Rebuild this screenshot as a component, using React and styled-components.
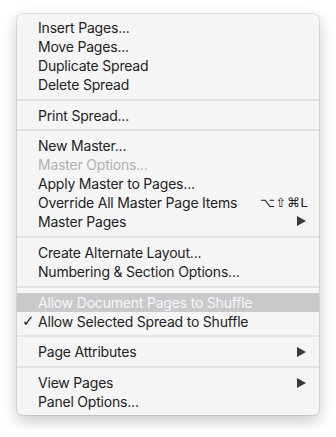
import React from 'react';
import styled, { createGlobalStyle } from 'styled-components';

const GlobalStyle = createGlobalStyle`
    html, body {
        margin: 0;
        background: #ffffff;
    }
`;

const Page = styled.div`
    padding: 14px 17px;
`;

const Menu = styled.div`
    width: 302px;
    box-sizing: border-box;
    padding: 4px 0 4px;
    background-color: #f5f5f5;
    border-radius: 5px;
    box-shadow: 0 0 0 0.5px rgba(0, 0, 0, 0.18), 0 6px 16px rgba(0, 0, 0, 0.22);
    font-family: Inter, "Liberation Sans", sans-serif;
    font-size: 14px;
    letter-spacing: -0.2px;
    color: #232323;
`;

const Item = styled.div`
    position: relative;
    display: flex;
    align-items: center;
    height: 18.9px;
    padding: 0 11px 0 21px;
    background-color: ${p => (p.$highlighted ? '#c9c9c9' : 'transparent')};
    color: ${p => (p.$highlighted ? '#f6f5fd' : p.$disabled ? '#b1b1b1' : 'inherit')};
    white-space: nowrap;
`;

const Label = styled.span`
    flex: 1;
`;

const Check = styled.span`
    position: absolute;
    left: 5px;
    top: 0;
    line-height: 19px;
    font-family: "DejaVu Sans", sans-serif;
    font-size: 15px;
    font-weight: bold;
`;

const Shortcut = styled.span`
    font-family: "DejaVu Sans", sans-serif;
    font-size: 13px;
    letter-spacing: 0.5px;
`;

const Separator = styled.div`
    height: 2px;
    margin: 5px 0;
    background-color: #e3e3e3;
`;

const Arrow = () => (
    <svg width="9" height="10" viewBox="0 0 9 10" style={{ marginRight: 2 }}>
        <polygon points="0,0 9,5 0,10" fill="#3a3a3a" />
    </svg>
);

const groups = [
    [
        { label: 'Insert Pages...' },
        { label: 'Move Pages...' },
        { label: 'Duplicate Spread' },
        { label: 'Delete Spread' },
    ],
    [{ label: 'Print Spread...' }],
    [
        { label: 'New Master...' },
        { label: 'Master Options...', disabled: true },
        { label: 'Apply Master to Pages...' },
        { label: 'Override All Master Page Items', shortcut: '⌥⇧⌘L' },
        { label: 'Master Pages', submenu: true },
    ],
    [
        { label: 'Create Alternate Layout...' },
        { label: 'Numbering & Section Options...' },
    ],
    [
        { label: 'Allow Document Pages to Shuffle', highlighted: true },
        { label: 'Allow Selected Spread to Shuffle', checked: true },
    ],
    [{ label: 'Page Attributes', submenu: true }],
    [
        { label: 'View Pages', submenu: true },
        { label: 'Panel Options...' },
    ],
];

export default function App() {
    return (
        <Page>
            <GlobalStyle />
            <Menu>
                {groups.map((group, gi) => (
                    <React.Fragment key={gi}>
                        {gi > 0 && <Separator />}
                        {group.map((item, i) => (
                            <Item
                                key={i}
                                $disabled={item.disabled}
                                $highlighted={item.highlighted}
                            >
                                {item.checked && <Check>✓</Check>}
                                <Label>{item.label}</Label>
                                {item.shortcut && <Shortcut>{item.shortcut}</Shortcut>}
                                {item.submenu && <Arrow />}
                            </Item>
                        ))}
                    </React.Fragment>
                ))}
            </Menu>
        </Page>
    );
};
